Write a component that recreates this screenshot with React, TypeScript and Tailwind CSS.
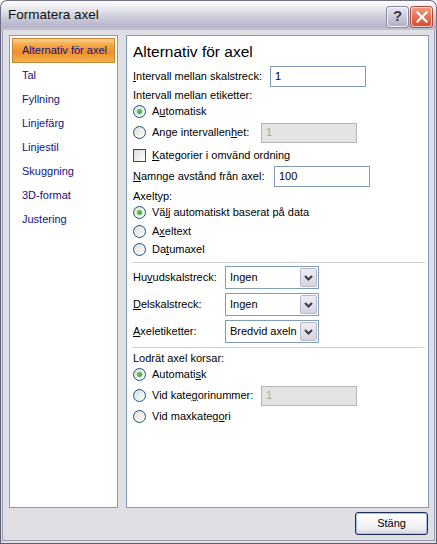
import React from 'react';

const FONT = "[font-family:'Liberation_Sans',Arial,sans-serif]";

function Radio({ checked, children }: { checked?: boolean; children: React.ReactNode }) {
  return (
    <div className="flex items-center">
      <span className="relative w-[13px] h-[13px] rounded-full border border-[#1c5180] bg-[linear-gradient(135deg,#dcdcd7,#ffffff)] flex items-center justify-center shrink-0">
        {checked && (
          <span className="w-[5px] h-[5px] rounded-full bg-[radial-gradient(circle_at_40%_40%,#5ed05e,#1a9a1a)]" />
        )}
      </span>
      <span className="ml-[6px]">{children}</span>
    </div>
  );
}

function Check({ children }: { children: React.ReactNode }) {
  return (
    <div className="flex items-center">
      <span className="w-[13px] h-[13px] border border-[#1c5180] bg-[linear-gradient(135deg,#dcdcd7,#ffffff)] shrink-0" />
      <span className="ml-[6px]">{children}</span>
    </div>
  );
}

function Combo({ value }: { value: string }) {
  return (
    <div className="w-[94px] h-[23px] border border-[#7f9db9] bg-white flex items-center">
      <span className="flex-1 pl-[4px] whitespace-nowrap overflow-hidden">{value}</span>
      <span className="w-[17px] h-[19px] mr-[1px] rounded-[2px] border border-[#b8b8c8] bg-[linear-gradient(180deg,#ededf3,#d4d4e0)] flex items-center justify-center">
        <svg width="9" height="6" viewBox="0 0 9 6">
          <polyline points="1,1 4.5,4.5 8,1" fill="none" stroke="#3a3a4a" strokeWidth="2" />
        </svg>
      </span>
    </div>
  );
}

function Input({ value, width, disabled }: { value: string; width: number; disabled?: boolean }) {
  return (
    <div
      className={
        disabled
          ? 'h-[20px] border border-[#b4b4b4] bg-[#e3e3e3] text-[#aca899] flex items-center pl-[4px]'
          : 'h-[21px] border border-[#7f9db9] bg-white flex items-center pl-[4px]'
      }
      style={{ width }}
    >
      {value}
    </div>
  );
}

const navItems = ['Alternativ för axel', 'Tal', 'Fyllning', 'Linjefärg', 'Linjestil', 'Skuggning', '3D-format', 'Justering'];

export default function App() {
  return (
    <div className={`w-[437px] h-[544px] bg-white flex flex-col text-[11px] text-black ${FONT}`}>
      {/* title bar */}
      <div className="h-[30px] shrink-0 rounded-t-[7px] border border-b-0 border-[#6f6f86] bg-[linear-gradient(180deg,#ffffff_0%,#ececf2_22%,#cdcddb_55%,#b6b6ca_88%,#c2c2d2_100%)] flex items-center pl-[7px] pr-[4px]">
        <span className="text-[13.5px] text-[#111] flex-1">Formatera axel</span>
        <div className="w-[21px] h-[20px] rounded-[3px] border border-[#f4f4f8] bg-[linear-gradient(180deg,#e6e6f0,#b0b0c6)] shadow-[0_0_0_1px_#8a8aa2] flex items-center justify-center text-[15px] font-bold text-[#3a3a50] mb-[-2px]">
          ?
        </div>
        <div className="w-[21px] h-[20px] ml-[3px] rounded-[3px] border border-[#f6d6cc] bg-[linear-gradient(180deg,#f09a80,#d84a2e)] shadow-[0_0_0_1px_#b04a3a] flex items-center justify-center mb-[-2px]">
          <svg width="12" height="12" viewBox="0 0 12 12">
            <path d="M1.5 1.5 L10.5 10.5 M10.5 1.5 L1.5 10.5" stroke="#ffffff" strokeWidth="2.2" strokeLinecap="square" />
          </svg>
        </div>
      </div>

      {/* body */}
      <div className="flex-1 bg-[#e0dfe3] border-x border-b border-[#5c5c74] flex flex-col">
        <div className="flex-1 mx-[1px] mb-[2px] border-x border-b border-[#9c9cb0] flex flex-col pl-[6px] pr-[5px] pt-[5px] pb-[5px]">
          <div className="flex-1 flex gap-[8px]">
            {/* left nav */}
            <div className="w-[109px] border border-[#7f9db9] bg-white pt-[2px] px-[2px]">
              {navItems.map((item, i) =>
                i === 0 ? (
                  <div
                    key={item}
                    className="h-[25px] border border-[#c28634] bg-[linear-gradient(180deg,#fbd08a_0%,#f6a948_25%,#f08f2c_55%,#f5b04e_100%)] flex items-center pl-[9px] text-[#14147e]"
                  >
                    {item}
                  </div>
                ) : (
                  <div key={item} className="h-[24px] flex items-center pl-[10px] text-[#14147e]">
                    {item}
                  </div>
                )
              )}
            </div>

            {/* right content */}
            <div className="w-[303px] border border-[#7f9db9] bg-white pl-[6px] pr-[2px] flex flex-col">
              <div className="h-[20px] mt-[6px] flex items-center text-[15.5px]">Alternativ för axel</div>

              <div className="h-[21px] mt-[4px] flex items-center">
                <span className="w-[137px]">
                  <u>I</u>ntervall mellan skalstreck:
                </span>
                <Input value="1" width={96} />
              </div>

              <div className="h-[16px] flex items-center">Intervall mellan etiketter:</div>
              <div className="h-[16px] flex items-center">
                <Radio checked>
                  A<u>u</u>tomatisk
                </Radio>
              </div>
              <div className="h-[21px] mt-[3px] flex items-center">
                <div className="w-[128px]">
                  <Radio>
                    Ange intervallen<u>h</u>et:
                  </Radio>
                </div>
                <Input value="1" width={96} disabled />
              </div>

              <div className="h-[18px] mt-[3px] flex items-center">
                <Check>
                  <u>K</u>ategorier i omvänd ordning
                </Check>
              </div>

              <div className="h-[20px] mt-[2px] flex items-center">
                <span className="w-[141px]">
                  <u>N</u>amnge avstånd från axel:
                </span>
                <Input value="100" width={96} />
              </div>

              <div className="h-[16px] mt-[2px] flex items-center">Axeltyp:</div>
              <div className="h-[16px] flex items-center">
                <Radio checked>
                  Vä<u>l</u>j automatiskt baserat på data
                </Radio>
              </div>
              <div className="h-[16px] mt-[3px] flex items-center">
                <Radio>
                  A<u>x</u>eltext
                </Radio>
              </div>
              <div className="h-[16px] mt-[2px] flex items-center">
                <Radio>
                  Da<u>t</u>umaxel
                </Radio>
              </div>

              <div className="h-px mt-[5px] bg-[#d0d0d0] mr-[1px] ml-[-1px]" />

              <div className="h-[23px] mt-[3px] flex items-center">
                <span className="w-[92px]">
                  Hu<u>v</u>udskalstreck:
                </span>
                <Combo value="Ingen" />
              </div>
              <div className="h-[23px] mt-[4px] flex items-center">
                <span className="w-[92px]">
                  <u>D</u>elskalstreck:
                </span>
                <Combo value="Ingen" />
              </div>
              <div className="h-[23px] mt-[4px] flex items-center">
                <span className="w-[92px]">
                  <u>A</u>xeletiketter:
                </span>
                <Combo value="Bredvid axeln" />
              </div>

              <div className="h-px mt-[4px] bg-[#d0d0d0] mr-[1px] ml-[-1px]" />

              <div className="h-[16px] mt-[2px] flex items-center">Lodrät axel korsar:</div>
              <div className="h-[16px] flex items-center">
                <Radio checked>
                  Automati<u>s</u>k
                </Radio>
              </div>
              <div className="h-[21px] mt-[3px] flex items-center">
                <div className="w-[128px]">
                  <Radio>
                    Vid kate<u>g</u>orinummer:
                  </Radio>
                </div>
                <Input value="1" width={96} disabled />
              </div>
              <div className="h-[16px] mt-[2px] flex items-center">
                <Radio>
                  Vid maxkateg<u>o</u>ri
                </Radio>
              </div>
            </div>
          </div>

          {/* footer */}
          <div className="h-[23px] mt-[4px] flex justify-end pr-[1px]">
            <button className="w-[73px] h-[23px] rounded-[3px] border border-[#1c2f5c] bg-[linear-gradient(180deg,#ffffff,#f0f0f4_70%,#d6d6e0)] shadow-[inset_0_0_0_1px_#a8bff0] flex items-center justify-center text-[11px] text-black">
              Stäng
            </button>
          </div>
        </div>
      </div>
    </div>
  );
}
